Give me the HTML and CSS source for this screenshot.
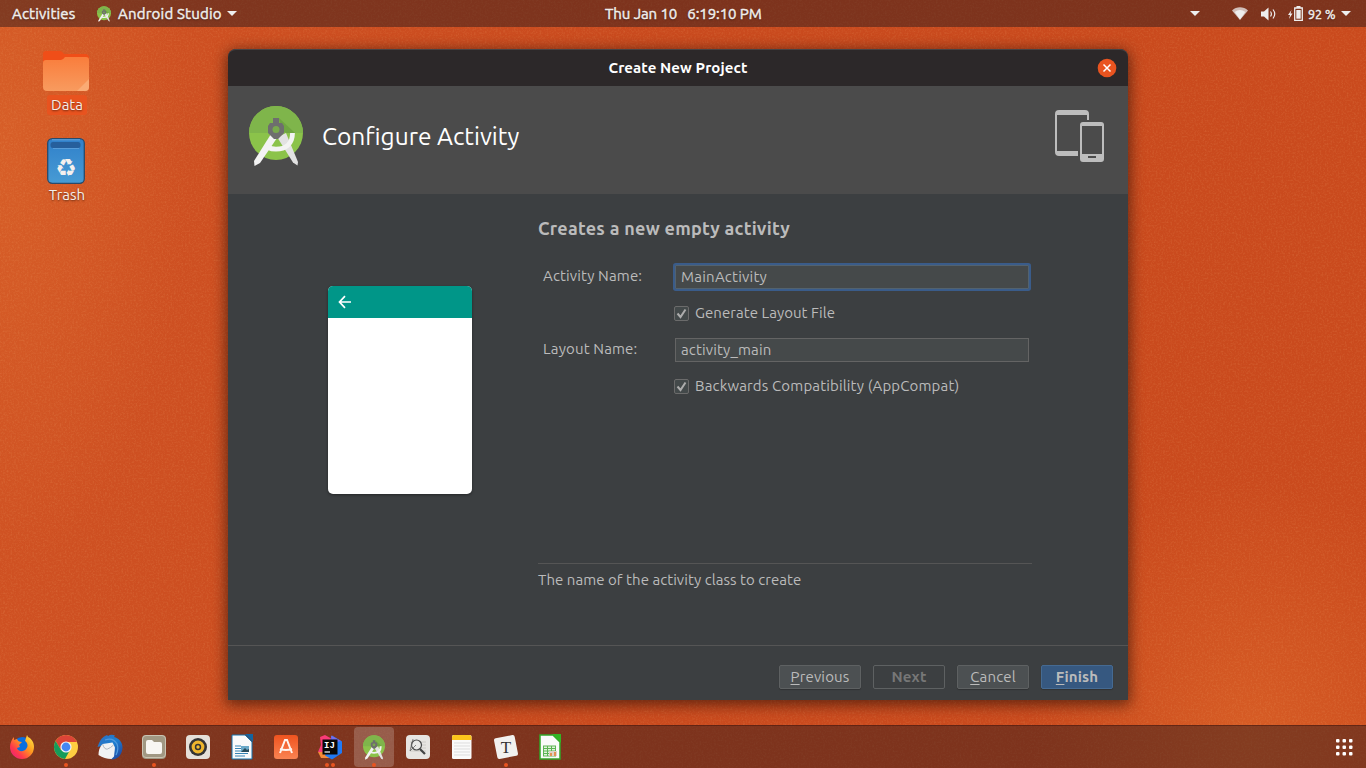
FILE: index.html
```html
<!DOCTYPE html>
<html lang="en">
<head>
<meta charset="utf-8">
<title>Create New Project</title>
<link rel="stylesheet" href="styles.css">
</head>
<body>
<svg class="defs" width="0" height="0">
  <defs>
    <linearGradient id="folder" x2="0" y2="1"><stop offset="0" stop-color="#f97d3c"/><stop offset="1" stop-color="#f89b5f"/></linearGradient>
    <linearGradient id="bin" x2="0" y2="1"><stop offset="0" stop-color="#3080ca"/><stop offset="1" stop-color="#479bd4"/></linearGradient>
    <linearGradient id="fox" x1="1" x2="0" y2="1"><stop offset="0" stop-color="#fff14a"/><stop offset=".4" stop-color="#ff9a1f"/><stop offset=".7" stop-color="#ff3b4a"/><stop offset="1" stop-color="#e3188c"/></linearGradient>
    <linearGradient id="bird" x2="1" y2="1"><stop offset="0" stop-color="#2f6fc0"/><stop offset=".5" stop-color="#1d7fd0"/><stop offset="1" stop-color="#223a94"/></linearGradient>
    <linearGradient id="bag" x2="0" y2="1"><stop offset="0" stop-color="#f0531f"/><stop offset="1" stop-color="#f98352"/></linearGradient>
  </defs>
  <symbol id="studio" viewBox="0 0 54 60">
    <circle cx="27" cy="27" r="27" fill="#8bc34a"/>
    <path d="M0 27a27 27 0 0 1 54 0z" fill="#7fb54b"/>
    <path d="M30 12l16 15h-8l-6-2z" fill="#5f9638" opacity=".5"/>
    <path d="M31 30l6-3 12 29-.5 3.500-4.500-3-15-24z" fill="#e2e2e2"/>
    <path d="M22 28l6 4-17 25-5.500 3-.5-5z" fill="#f3f3f3"/>
    <path d="M43.500 27c0 11-7 16.200-16.500 16.200-3 0-5.500-.5-8-1.700" fill="none" stroke="#f3f3f3" stroke-width="4.800"/>
    <path d="M24 12h6v5h3l2 3v7l-6 6h-4l-6-6v-7l2-3h3z" fill="#6e6e6e"/>
    <circle cx="27" cy="23.500" r="3.500" fill="#79a94d"/>
  </symbol>
</svg>
<svg class="grain" width="1366" height="768">
  <filter id="noise" x="0" y="0" width="100%" height="100%">
    <feTurbulence type="fractalNoise" baseFrequency=".55" numOctaves="2" seed="4"/>
    <feColorMatrix values="0 0 0 0 1  0 0 0 0 .65  0 0 0 0 .3  1.500 0 0 0 -.65"/>
  </filter>
  <rect width="1366" height="768" filter="url(#noise)"/>
</svg>

<header class="panel">
  <span class="t activities">Activities</span>
  <svg class="appicon" width="14" height="16"><use href="#studio"/></svg>
  <span class="t appname">Android Studio</span>
  <svg class="arrow" width="10" height="5"><path d="M0 0h10L5 5z"/></svg>
  <span class="t clock">Thu Jan 10 &nbsp; 6:19:10 PM</span>
  <div class="tray">
    <svg class="arrow" width="10" height="5"><path d="M0 0h10L5 5z"/></svg>
    <svg class="wifi" width="16" height="13" viewBox="0 0 16 13"><path d="M0 3.500C4.500-.8 11.500-.8 16 3.500L8 13z" opacity=".75"/><path d="M2.700 5C6 2.300 10 2.300 13.300 5L8 12.500z"/></svg>
    <svg class="vol" width="15" height="14" viewBox="0 0 15 14"><path d="M0 4.500h3L7.500.5v13L3 9.500H0z"/><path d="M9.500 4.500q1.800 2.500 0 5M12 2.500q3.500 4.500 0 9" fill="none" stroke="#eee" stroke-width="1.200"/></svg>
    <svg class="batt" width="15" height="15" viewBox="0 0 15 15"><path d="M3.500 4L0 9h2l-1 4 3.500-5.500h-2zM8.500 0h4v2h-4z"/><path d="M6.700 2h7.600v12.300H6.700z" fill="none" stroke="#eee" stroke-width="1.300"/><path d="M8.300 4h4.400v8.700H8.300z"/></svg>
    <span class="t pct">92 %</span>
    <svg class="arrow" width="10" height="5"><path d="M0 0h10L5 5z"/></svg>
  </div>
</header>

<main class="desktop">
  <div class="shortcuts">
    <div class="shortcut data">
      <svg width="46" height="42" viewBox="0 0 46 42"><path d="M0 9V4q0-3 3-3h14q2 0 4 3h21q4 0 4 4v8H0z" fill="#f04e18"/><path d="M0 13q0-3 3-3h15q2 0 4-3h21q3 0 3 3v27q0 4-4 4H4q-4 0-4-4z" fill="url(#folder)"/><path d="M34 41l12-12v8q0 4-4 4z" fill="#fbb380" opacity=".7"/></svg>
      <span class="label picked">Data</span>
    </div>
    <div class="shortcut">
      <svg width="38" height="46" viewBox="0 0 38 46"><rect x=".7" y=".7" width="36.600" height="44.600" rx="4.500" fill="url(#bin)" stroke="#284a6b" stroke-width="1.300"/><path d="M5 1.800h28" stroke="#65a6dc"/><rect x="3.500" y="4" width="30" height="6" rx="2.500" fill="#265f9c"/><path d="M6 10.500h26" stroke="#65a6dc" stroke-width=".7"/><text class="recycle" x="19" y="37.500">♻</text></svg>
      <span class="label">Trash</span>
    </div>
  </div>

  <section class="dialog">
    <div class="titlebar">
      <h1 class="t title">Create New Project</h1>
      <svg class="close" width="20" height="20"><circle cx="10" cy="10" r="9.300" fill="#e95420"/><path d="M6.500 6.500l7 7M13.500 6.500l-7 7" stroke="#fff" stroke-width="1.500"/></svg>
    </div>
    <div class="banner">
      <svg width="54" height="60"><use href="#studio"/></svg>
      <h2 class="t">Configure Activity</h2>
      <svg class="devices" width="49" height="52"><path d="M4 0h26q4 0 4 4v6h-2V5H2v36h21v5H4q-4 0-4-4V4q0-4 4-4z"/><path fill-rule="evenodd" d="M28 12h18q3 0 3 3v34q0 3-3 3H28q-3 0-3-3V15q0-3 3-3zM27 16v28h20V16zM33 46h8v2h-8z"/></svg>
    </div>
    <div class="content">
      <div class="preview">
        <div class="appbar"><svg width="14" height="14"><path d="M13 7H2M7 1.200L1.500 7 7 12.800" fill="none" stroke="#fff" stroke-width="1.700"/></svg></div>
      </div>
      <div class="form">
        <h3 class="t">Creates a new empty activity</h3>
        <div class="fields">
          <label class="t">Activity Name:</label>
          <div class="input focus"><span class="t">MainActivity</span></div>
          <div class="check"><svg width="15" height="15"><rect x=".5" y=".5" width="14" height="14" rx="1.500" fill="#43494a" stroke="#6b6b6b"/><path d="M3.500 7.500l3 3.500 5-7.500" fill="none" stroke="#adadad" stroke-width="2"/></svg><span class="t generate">Generate Layout File</span></div>
          <label class="t">Layout Name:</label>
          <div class="input"><span class="t">activity_main</span></div>
          <div class="check"><svg width="15" height="15"><rect x=".5" y=".5" width="14" height="14" rx="1.500" fill="#43494a" stroke="#6b6b6b"/><path d="M3.500 7.500l3 3.500 5-7.500" fill="none" stroke="#adadad" stroke-width="2"/></svg><span class="t">Backwards Compatibility (AppCompat)</span></div>
        </div>
        <p class="hint"><span class="t">The name of the activity class to create</span></p>
      </div>
    </div>
    <div class="actions">
      <button class="btn wide"><span class="t"><u>P</u>revious</span></button>
      <button class="btn off"><span class="t">Next</span></button>
      <button class="btn"><span class="t"><u>C</u>ancel</span></button>
      <button class="btn primary"><span class="t"><u>F</u>inish</span></button>
    </div>
  </section>
</main>

<footer class="dock">
  <div class="item"><svg width="26" height="26"><circle cx="13.500" cy="13" r="10" fill="#0a6fe0"/><path d="M1 13c0-4 2-8 4-10v3l3-1q1 3 5 3l-3 3 1 2-3 1c1 4 7 4 9 1 3-3 1-7-1-8l2-6 1 2c4 2 6 6 6 10a12 12 0 0 1-24 0z" fill="url(#fox)"/></svg></div>
  <div class="item one"><svg width="26" height="26"><circle cx="13" cy="13" r="12" fill="#ffcd41"/><path d="M2.600 7A12 12 0 0 1 23.400 7L24 8H13l-5 8z" fill="#dc4437"/><path d="M2.600 7a12 12 0 0 0 9.400 18l5-9h-9z" fill="#159b5a"/><circle cx="13" cy="13" r="5.600" fill="#f4f4f4"/><circle cx="13" cy="13" r="4.400" fill="#4587f3"/></svg></div>
  <div class="item"><svg width="26" height="26"><path d="M.5 13C2 9 4 3 10 1l1 1q3-2 7-.5l-1 1.500c5 1 9 6 8.500 11-.5 7-5 11.500-11 11.500L4 12z" fill="url(#bird)"/><path d="M8 6q8-3 12 4 2 5-1 11" stroke="#4f9ade" stroke-width="1.300" fill="none"/><path d="M1.500 21q0-7 4-11l10-1.500 2.500 5-1 9-2.500 2.500q-7 0-13-4z" fill="#f1f2f3"/><path d="M5.500 10q2 6 5 5t6-4" fill="none" stroke="#afb6bd"/></svg></div>
  <div class="item one"><svg width="26" height="26"><rect x="1" y="1" width="24" height="24" rx="4" fill="#a19883"/><rect x="1.500" y="1.500" width="23" height="22" rx="3.500" fill="none" stroke="#cbc4b3"/><path d="M5 8q0-2 2-2h4l2 2h6q2 0 2 2v8q0 2-2 2H7q-2 0-2-2z" fill="#f8f6f2"/></svg></div>
  <div class="item"><svg width="26" height="26"><rect x="1" y="1" width="24" height="24" rx="4" fill="#e5e0d9"/><circle cx="13" cy="13" r="9" fill="#343434"/><circle cx="13" cy="13" r="4.800" fill="none" stroke="#eeb62d" stroke-width="3.200"/><circle cx="13" cy="13" r="1.700" fill="#f3bf32"/></svg></div>
  <div class="item"><svg width="26" height="26"><path d="M3 1h13l7 7v17H3z" fill="#fafafa" stroke="#1474ae"/><path d="M16 0h8v8z" fill="#1465a0"/><path d="M6 12h6M6 14.500h6M6 17h6M6 19.500h13M6 22h10" stroke="#3583b5"/><path d="M12 12h8v6h-8z" fill="#6ba9c8"/><path d="M12 18l4-4 2 2 2-1v3z" fill="#284a5a"/></svg></div>
  <div class="item"><svg width="26" height="26"><rect x="1" y="1" width="24" height="24" rx="3" fill="url(#bag)"/><path d="M7 19L12 6h2l5 13M7 15q6 2 12 0" fill="none" stroke="#fff3ed" stroke-width="2"/></svg></div>
  <div class="item two"><svg width="26" height="26"><path d="M3 3l5-2 7 4-2 16-12-3 3-7z" fill="#fa3b78"/><path d="M1 18l12 0 1 6-10 0z" fill="#f68a36"/><path d="M15 1.500l10 6V19l-10 6.500-7-4z" fill="#207af4"/><path d="M14 1.500l10 5.500-9 2z" fill="#776ced"/><rect x="5.500" y="5.500" width="15" height="15" fill="#080808"/><path d="M7.500 18h5.500" stroke="#fff" stroke-width="1.200"/><text class="ij" x="7" y="14">IJ</text></svg></div>
  <div class="item active one"><svg width="22" height="25"><use href="#studio"/></svg></div>
  <div class="item"><svg width="26" height="26"><rect x="1" y="1" width="24" height="24" rx="4" fill="#e7e5e2"/><path d="M5 8h16M5 11h16M5 14h16M5 17h16" stroke="#ceccc8"/><circle cx="11.500" cy="11" r="5" fill="#e9e9e7" stroke="#494949" stroke-width="1.200"/><path d="M15 15l5 5" stroke="#444" stroke-width="2.200"/><path d="M8 5L5 17l6-6" fill="none" stroke="#676767" stroke-width=".8"/></svg></div>
  <div class="item"><svg width="26" height="26"><rect x="3" y="1" width="19.500" height="24" rx="1.500" fill="#fafafa"/><path d="M3 6V3q0-2 2-2h15.500q2 0 2 2v3z" fill="#fcc51c"/><path d="M5 9h16M5 12h16M5 15h16M5 18h16M5 21h16" stroke="#ddd"/></svg></div>
  <div class="item one"><svg width="26" height="26"><rect x="2.500" y="2.500" width="21" height="21" rx="2" fill="#f2f1ef" transform="rotate(-11 13 13)"/><text class="ty" x="13" y="18.500">T</text></svg></div>
  <div class="item"><svg width="26" height="26"><path d="M3 1h13l7 7v17H3z" fill="#fafafa" stroke="#32a629" stroke-width="1.500"/><path d="M15 0h9v9z" fill="#32b425"/><path d="M6 12h13v10H6z" fill="#e2f3df"/><path d="M6 12h13M6 14.500h13M6 17h13M6 19.500h13M6 22h13M6.500 12v10M10.500 12v10M14.500 12v10M18.500 12v10" stroke="#5cb453"/><path d="M12 17h8v5h-8z" fill="#ddd4c8"/><path d="M13 22v-3h2v3zM17 22v-4h2v4z" fill="#e29352"/></svg></div>
  <svg class="apps" width="17" height="17"><g id="r"><rect width="3.500" height="3.500" rx="1"/><rect x="6.500" width="3.500" height="3.500" rx="1"/><rect x="13" width="3.500" height="3.500" rx="1"/></g><use href="#r" y="6.500"/><use href="#r" y="13"/></svg>
</footer>
</body>
</html>
```
FILE: styles.css
```css
* { box-sizing: border-box; }
body {
  margin: 0;
  width: 1366px;
  height: 768px;
  overflow: hidden;
  position: relative;
  display: flex;
  flex-direction: column;
  font: 15px/20px "Ubuntu", "Noto Sans", sans-serif;
  letter-spacing: .15px;
  color: #bbb;
  background:
    radial-gradient(ellipse 190px 420px at 0 150px, rgba(218, 100, 42, .7), transparent),
    radial-gradient(ellipse 220px 260px at 1250px 740px, rgba(220, 100, 40, .7), transparent),
    linear-gradient(100deg, #d05223, #c94a1e 45%, #ca4a1d);
}
h1, h2, h3, p { margin: 0; }
svg { display: block; flex: none; }
.defs, .grain { position: absolute; top: 0; left: 0; }
.grain { opacity: .18; }
.t { white-space: pre; }

.panel {
  position: relative;
  height: 27px;
  flex: none;
  display: flex;
  align-items: center;
  padding: 0 15px 0 12px;
  background: rgba(50, 28, 28, .5);
  color: #f0eeec;
  fill: #eee;
  letter-spacing: .2px;
  -webkit-text-stroke: .45px;
  text-shadow: 0 1px 2px rgba(0, 0, 0, .5);
}
.appicon { margin: 0 7px 0 21px; }
.appname { width: 104px; margin-right: 5px; }
.activities { width: 64px; }
.clock { margin-left: 368px; letter-spacing: -.07px; }
.tray { display: flex; align-items: center; margin-left: auto; }
.wifi { margin-left: 32px; }
.vol { margin-left: 13px; }
.batt { margin-left: 12px; }
.pct { width: 29px; margin: 0 4px 0 5px; font-size: 12.500px; letter-spacing: 0; }

.desktop { position: relative; height: 698px; flex: none; }
.shortcuts { width: 132px; padding-top: 23px; display: flex; flex-direction: column; gap: 23px; color: #f6eee9; }
.shortcut { display: flex; flex-direction: column; align-items: center; }
.label { margin: 1px 0 0 2px; padding: 0 4px; letter-spacing: 0; text-shadow: 0 1px 2px #0008; }
.data .label { margin-top: 3px; }
.picked { background: #e8531f; border-radius: 3px; }
.recycle { font: 24px "DejaVu Sans", sans-serif; fill: #f5f0ee; text-anchor: middle; letter-spacing: 0; }

.dialog {
  position: absolute;
  left: 228px;
  top: 22px;
  width: 900px;
  height: 651px;
  display: flex;
  flex-direction: column;
  background: #3c3f41;
  border-radius: 8px 8px 0 0;
  box-shadow: 0 3px 14px 2px rgba(0, 0, 0, .5);
}
.titlebar {
  height: 37px;
  display: grid;
  grid-template-columns: 42px 1fr 42px;
  align-items: center;
  background: #2c2829;
  border-top: 1px solid #464243;
  border-radius: 8px 8px 0 0;
}
.title { grid-column: 2; text-align: center; font-size: 15px; line-height: 20px; letter-spacing: .1px; color: #fff; }
.close { margin-left: 11px; }
.banner { height: 108px; display: flex; align-items: center; padding: 0 24px 8px 21px; background: #4b4b4b; }
.banner h2 { margin: 0 0 0 19px; font-size: 24.500px; line-height: 30px; font-weight: 400; letter-spacing: 0; color: #fff; }
.devices { margin-left: auto; fill: #bdbdbd; }
.content { height: 451px; display: flex; }
.preview { width: 144px; height: 208px; margin: 92px 66px 0 100px; border-radius: 5px; overflow: hidden; background: #fff; box-shadow: 0 1px 3px #0006; }
.appbar { height: 32px; padding: 9px 10px; background: #009688; }
.form { width: 494px; padding-top: 21px; }
.form h3 { font-size: 18px; line-height: 26px; letter-spacing: .27px; }
.fields {
  display: grid;
  grid-template-columns: 132px 358px;
  grid-template-rows: 28px 18px 28px 18px;
  row-gap: 13.500px;
  margin: 22px 0 0 3px;
  height: 174px;
  align-items: center;
}
.fields label { padding-left: 2px; margin-top: -2px; }
.input { height: 24px; margin: 0 2px; padding-left: 5px; border: 1px solid #646464; background: #45494a; line-height: 22px; }
.input.focus { border-color: #52626f; box-shadow: 0 0 0 2px #3a5c8a; border-radius: 1px; letter-spacing: .23px; }
.check { grid-column: 2; display: flex; align-items: center; gap: 6px; padding-left: 1px; }
.check span { margin: -2px 0 0; }
.generate { letter-spacing: .05px; }
.hint { margin-top: 126px; padding-top: 6px; border-top: 1px solid #555; letter-spacing: .05px; }
.actions { height: 55px; border-top: 1px solid #555; padding: 19px 15px 0; display: flex; justify-content: flex-end; gap: 12px; }
.btn { width: 72px; height: 24px; padding: 0; border: 1px solid #5e6162; border-radius: 2px; background: #4c5052; color: #bbb; font: inherit; letter-spacing: .15px; box-shadow: 0 1px 1px #0003; }
.wide { width: 82px; }
.off { background: #3c3f41; color: #777; font-weight: 700; box-shadow: none; }
.primary { background: #365880; border-color: #456a92; font-weight: 700; }
.btn u { text-underline-offset: 2px; }

.dock { position: relative; height: 43px; flex: none; display: flex; gap: 4px; padding: 1px 13px 0 2px; background: rgba(50, 28, 28, .5); border-top: 1px solid rgba(70, 20, 10, .5); }
.item { position: relative; width: 40px; height: 40px; display: flex; align-items: center; justify-content: center; }
.active { background: rgba(255, 255, 255, .2); border-radius: 4px; }
.one::after, .two::after, .two::before { content: ""; position: absolute; left: 18px; bottom: 0; width: 4px; height: 4px; border-radius: 50%; background: #e95420; }
.two::before { left: 15px; }
.two::after { left: 21px; }
.apps { margin: 12px 0 0 auto; fill: #fff; }
.ij { font: bold 9px "Liberation Mono", monospace; fill: #fff; }
.ty { font: 17px "Liberation Serif", serif; fill: #333; text-anchor: middle; }
```
